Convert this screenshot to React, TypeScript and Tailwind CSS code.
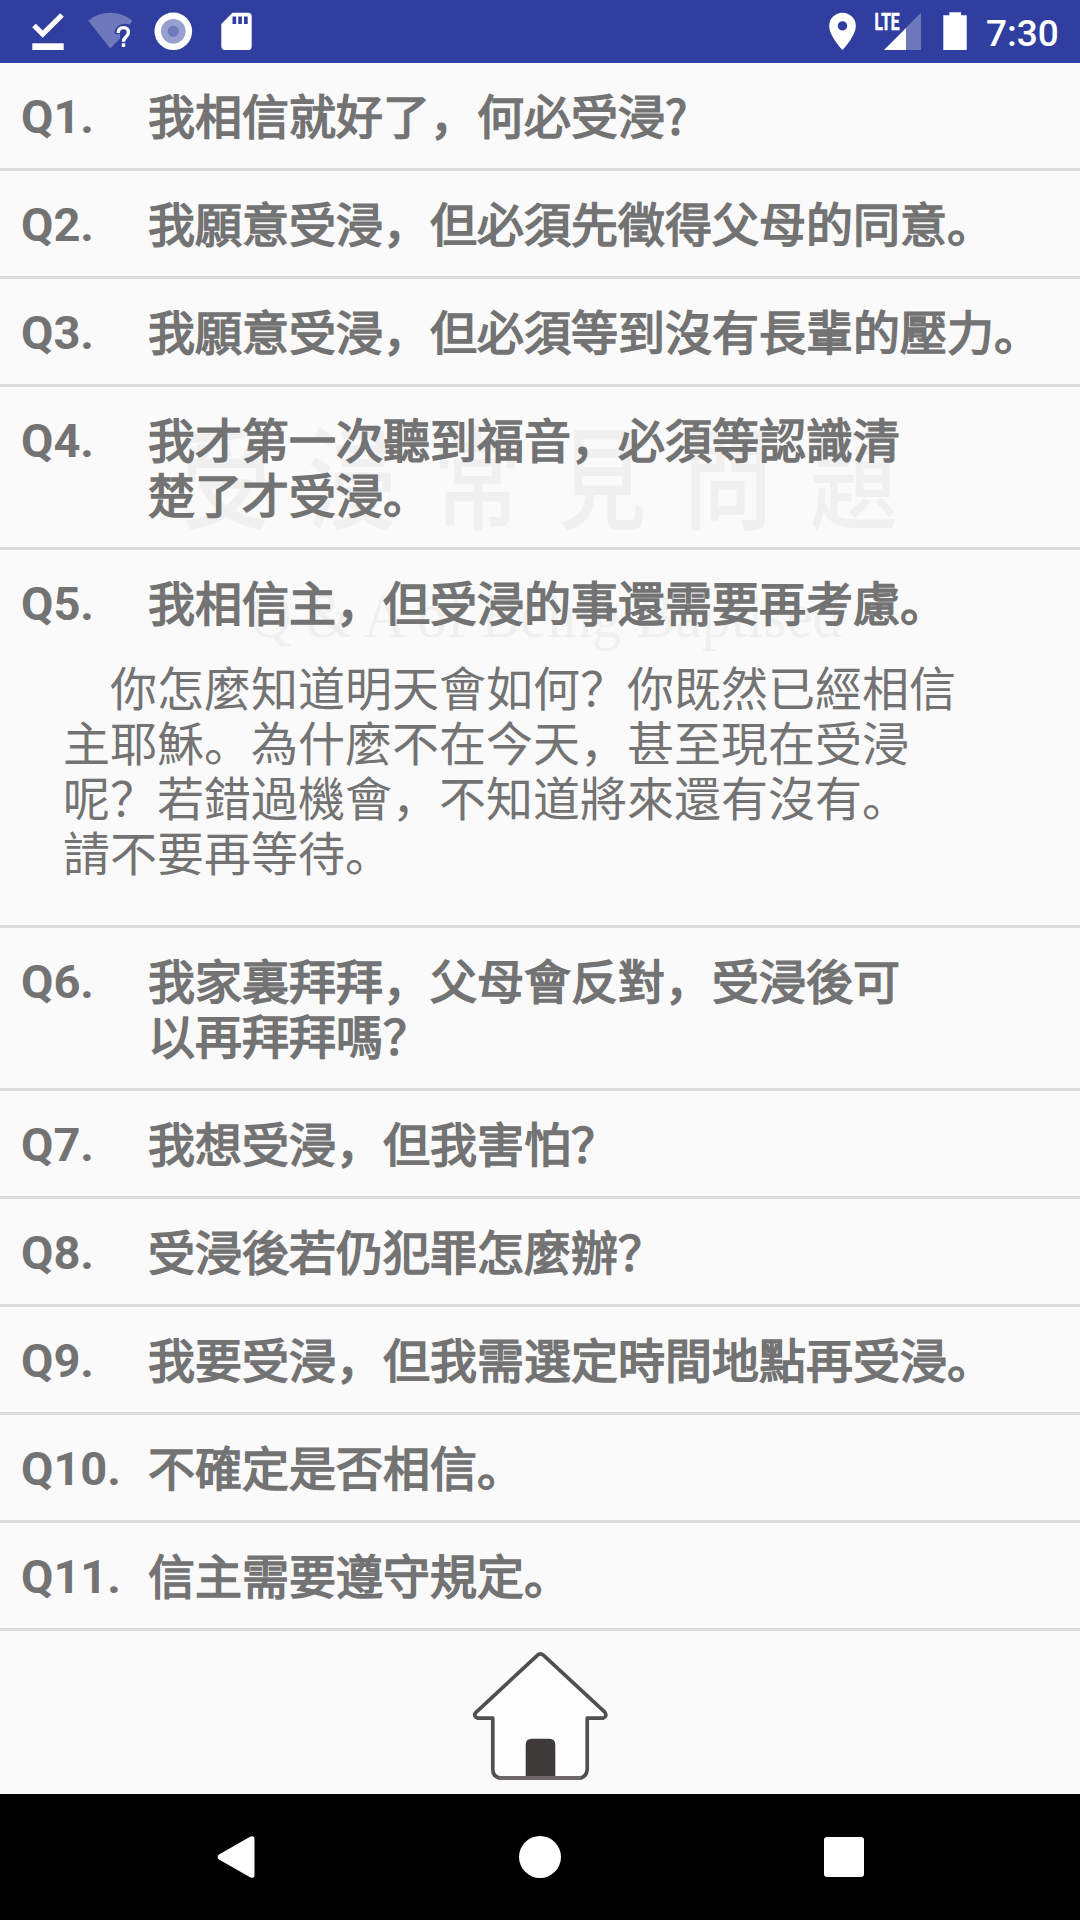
/** Frequently asked questions; each line is a separate row of text. */
const questions = [
  { id: "Q1.", lines: ["我相信就好了，何必受浸?"] },
  { id: "Q2.", lines: ["我願意受浸，但必須先徵得父母的同意。"] },
  { id: "Q3.", lines: ["我願意受浸，但必須等到沒有長輩的壓力。"] },
  { id: "Q4.", lines: ["我才第一次聽到福音，必須等認識清", "楚了才受浸。"] },
  {
    id: "Q5.",
    lines: ["我相信主，但受浸的事還需要再考慮。"],
    answer: [
      "　你怎麼知道明天會如何？你既然已經相信",
      "主耶穌。為什麼不在今天，甚至現在受浸",
      "呢？若錯過機會，不知道將來還有沒有。",
      "請不要再等待。",
    ],
  },
  { id: "Q6.", lines: ["我家裏拜拜，父母會反對，受浸後可", "以再拜拜嗎？"] },
  { id: "Q7.", lines: ["我想受浸，但我害怕？"] },
  { id: "Q8.", lines: ["受浸後若仍犯罪怎麼辦？"] },
  { id: "Q9.", lines: ["我要受浸，但我需選定時間地點再受浸。"] },
  { id: "Q10.", lines: ["不確定是否相信。"] },
  { id: "Q11.", lines: ["信主需要遵守規定。"] },
];

function StatusBar() {
  return (
    <header className="flex h-[63px] shrink-0 justify-between bg-[#303f9f] text-white">
      <div className="flex pl-4">
        <svg width="63" height="63" viewBox="0 0 63 63" aria-hidden="true">
          <path d="M18 25.5l8.7 8.7L46 15" fill="none" stroke="#fff" strokeWidth="5.2" />
          <path d="M16.3 43.3h31.4V50H16.3z" fill="#fff" />
        </svg>
        <svg width="63" height="63" viewBox="0 0 63 63" aria-hidden="true">
          <path
            d="M9.3 20.7C21.5 10 41 10 53.3 20.7L50.5 24.5c-8-2.5-15 2-15 9.5h5.5v4.5l-9.7 10z"
            fill="#fff"
            fillOpacity=".3"
          />
          <path
            d="M39.3 33c0-3.5 2-5.4 5.1-5.4s5 1.9 5 4.8c0 4.2-4.9 4.6-4.9 9.3M44.5 43.2v3.9"
            fill="none"
            stroke="#fff"
            strokeWidth="3.4"
          />
        </svg>
        <svg width="63" height="63" viewBox="0 0 63 63" aria-hidden="true">
          <circle cx="31.3" cy="31.3" r="18.8" fill="#fff" />
          <circle cx="31.3" cy="31.3" r="12.3" fill="#979fcf" />
          <circle cx="31.3" cy="31.3" r="5.6" fill="#6f79bc" />
        </svg>
        <svg width="63" height="63" viewBox="0 0 63 63" aria-hidden="true">
          <path
            d="M27.5 12.7H43a3.7 3.7 0 0 1 3.7 3.7v30A3.7 3.7 0 0 1 43 50H20a3.7 3.7 0 0 1-3.7-3.7V24z"
            fill="#fff"
          />
          <path d="M27.5 16.5h3.7v7.5h-3.7zM33.2 16.5h3.7v7.5h-3.7zM39 16.5h3.7v7.5H39z" fill="#303f9f" />
        </svg>
      </div>
      <div className="flex">
        <svg width="40" height="63" viewBox="822 0 40 63" aria-hidden="true">
          <path
            fillRule="evenodd"
            fill="#fff"
            d="M842.5 12.7a13.3 13.3 0 0 0-13.3 13.3c0 10 13.3 24 13.3 24s13.3-14 13.3-24a13.3 13.3 0 0 0-13.3-13.3zm0 8.5a4.7 4.7 0 1 1 0 9.4 4.7 4.7 0 0 1 0-9.4z"
          />
        </svg>
        <svg width="66" height="63" viewBox="862 0 66 63" aria-hidden="true">
          <path d="M906 27.5L921 12.7V50h-15z" fill="#fff" fillOpacity=".3" />
          <path d="M884 50L906 28V50z" fill="#fff" />
          <text
            x="874.5"
            y="30"
            textLength="25"
            lengthAdjust="spacingAndGlyphs"
            fill="#fff"
            stroke="#fff"
            strokeWidth=".6"
            className="font-[Roboto,sans-serif] text-[23px] font-bold"
          >
            LTE
          </text>
        </svg>
        <svg width="50" height="63" viewBox="928 0 50 63" aria-hidden="true">
          <path d="M949.3 12.3h11.7v3h5.7V50h-23.4V15.3h6z" fill="#fff" />
        </svg>
        <span className="w-[102px] pt-[2px] pl-2 font-[Roboto,sans-serif] text-[37px] leading-[63px] font-medium">
          7:30
        </span>
      </div>
    </header>
  );
}

/** Faint title printed behind the question list. */
function Watermark() {
  return (
    <div className="pointer-events-none absolute inset-x-0 top-[418px] z-0 text-[#f0f0f0]">
      <svg width="1080" height="250" viewBox="0 0 1080 250" className="overflow-visible" aria-hidden="true">
        <g transform="scale(1 1.27)" fill="currentColor">
          <text x="182" y="81" className="font-['Noto_Sans_CJK_TC',sans-serif] text-[88px] font-medium tracking-[37.5px]">
            受浸常見問題
          </text>
        </g>
        <text
          x="249"
          y="219"
          textLength="593"
          lengthAdjust="spacingAndGlyphs"
          fill="currentColor"
          className="font-['Liberation_Serif',serif] text-[64px]"
        >
          Q &amp; A of Being Baptised
        </text>
      </svg>
    </div>
  );
}

function NavigationBar() {
  return (
    <nav className="flex h-[126px] shrink-0 items-center justify-center bg-black">
      <button type="button" aria-label="Back" className="flex w-[304px] justify-center">
        <svg width="38" height="42" viewBox="0 0 38 42" aria-hidden="true">
          <path d="M33.5.6Q37.5-1 37.5 3.5v35q0 4.5-4 2.9L2 23.5q-3-2.5 0-5z" fill="#fff" />
        </svg>
      </button>
      <button type="button" aria-label="Home" className="flex w-[304px] justify-center">
        <span className="size-[42px] rounded-full bg-white" />
      </button>
      <button type="button" aria-label="Recents" className="flex w-[304px] justify-center">
        <span className="size-10 rounded-[3px] bg-white" />
      </button>
    </nav>
  );
}

export default function App() {
  return (
    <div className="relative flex h-[1920px] w-[1080px] flex-col overflow-hidden bg-[#fafafa] font-[Roboto,'Noto_Sans_CJK_SC',sans-serif] text-[#737373]">
      <StatusBar />
      <Watermark />
      <main className="relative z-10 flex-1">
        <ul>
          {questions.map((question) => (
            <li key={question.id} className="border-b-3 border-[#dadada]">
              <div className="flex pt-[23px] pb-[27px] pl-[21px] text-[47px] leading-[55px]">
                <span className="-mb-[3px] w-[127px] shrink-0 pt-[3px] font-bold">{question.id}</span>
                <div className="font-['Noto_Sans_CJK_SC',sans-serif] [-webkit-text-stroke:1.6px_#737373]">
                  {question.lines.map((line) => (
                    <p key={line} className="whitespace-nowrap">
                      {line}
                    </p>
                  ))}
                </div>
              </div>
              {question.answer && (
                <div className="h-[270px] pt-[7px] pl-[63px] text-[47px] leading-[55px]">
                  {question.answer.map((line) => (
                    <p key={line} className="whitespace-nowrap">
                      {line}
                    </p>
                  ))}
                </div>
              )}
            </li>
          ))}
        </ul>
        <button type="button" aria-label="Home page" className="flex w-full justify-center pt-[19px]">
          <svg width="140" height="133" viewBox="90 90 420 400" aria-hidden="true">
            <path
              d="M292 106Q301 97 311 106L495 277Q503 289 490 295H442V449Q440 475 416 475H182Q158 473 158 449V295H113Q99 290 106 279z"
              fill="#fdfdfd"
              stroke="#514e4e"
              strokeWidth="11"
              strokeLinejoin="round"
            />
            <path d="M257 470V376Q257 357 275 357H328Q346 357 346 376V470z" fill="#3e3a39" />
            <path d="M176 475H424" stroke="#6d696a" strokeWidth="12" />
          </svg>
        </button>
      </main>
      <NavigationBar />
    </div>
  );
}
